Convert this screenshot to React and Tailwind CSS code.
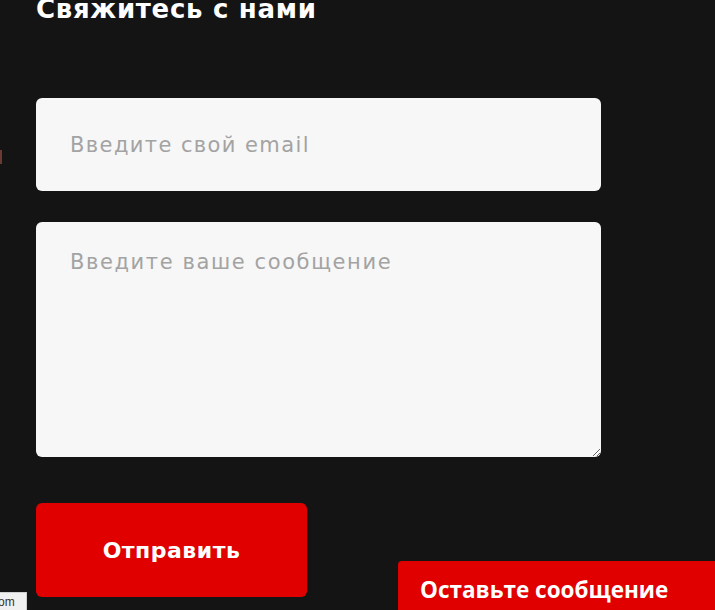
import React from 'react';

const App = () => {
    return (
        <div className="relative w-[715px] h-[610px] overflow-hidden bg-[#141414]" style={{ fontFamily: '"DejaVu Sans", "Noto Sans", sans-serif' }}>
            <div className="pl-[36px] w-[601px] flex flex-col">
                <h2 className="text-white font-bold text-[26px] tracking-[0.7px] leading-none -mt-[4px] h-[30px]">Свяжитесь с нами</h2>

                <form className="flex flex-col gap-[31px] mt-[72px]">
                    <input
                        type="email"
                        placeholder="Введите свой email"
                        className="h-[93px] w-full rounded-[6px] bg-[#f7f7f7] px-[34px] text-[21px] tracking-[1.4px] text-gray-800 placeholder:text-[#a3a3a3] outline-none"
                    />
                    <textarea
                        placeholder="Введите ваше сообщение"
                        className="h-[235px] w-full rounded-[6px] bg-[#f7f7f7] px-[34px] pt-[25px] text-[21px] tracking-[1.6px] text-gray-800 placeholder:text-[#a3a3a3] outline-none resize-y"
                    />
                    <button
                        type="button"
                        className="mt-[15px] h-[94px] w-[271px] rounded-[6px] bg-[#e00000] text-white font-bold text-[22px] tracking-[0.5px]"
                    >
                        Отправить
                    </button>
                </form>
            </div>

            <div className="absolute left-0 top-[150px] w-[2px] h-[14px] bg-[#6b3a32]" />

            <div className="absolute left-[398px] top-[561px] w-[330px] h-[60px] bg-[#e00000] rounded-tl-[4px] pl-[22px] pt-[12px]">
                <span className="text-white font-bold text-[22.5px]" style={{ fontFamily: '"Open Sans", sans-serif' }}>Оставьте сообщение</span>
            </div>

            <div className="absolute left-0 top-[592px] h-[18px] w-[27px] bg-[#f0f0f0] border-t border-r border-[#cfcfcf] text-[12px] leading-[18px] text-[#333] overflow-hidden" style={{ fontFamily: '"Liberation Sans", sans-serif' }}>
                <span className="-ml-[2px]">om</span>
            </div>
        </div>
    );
};

export default App;
